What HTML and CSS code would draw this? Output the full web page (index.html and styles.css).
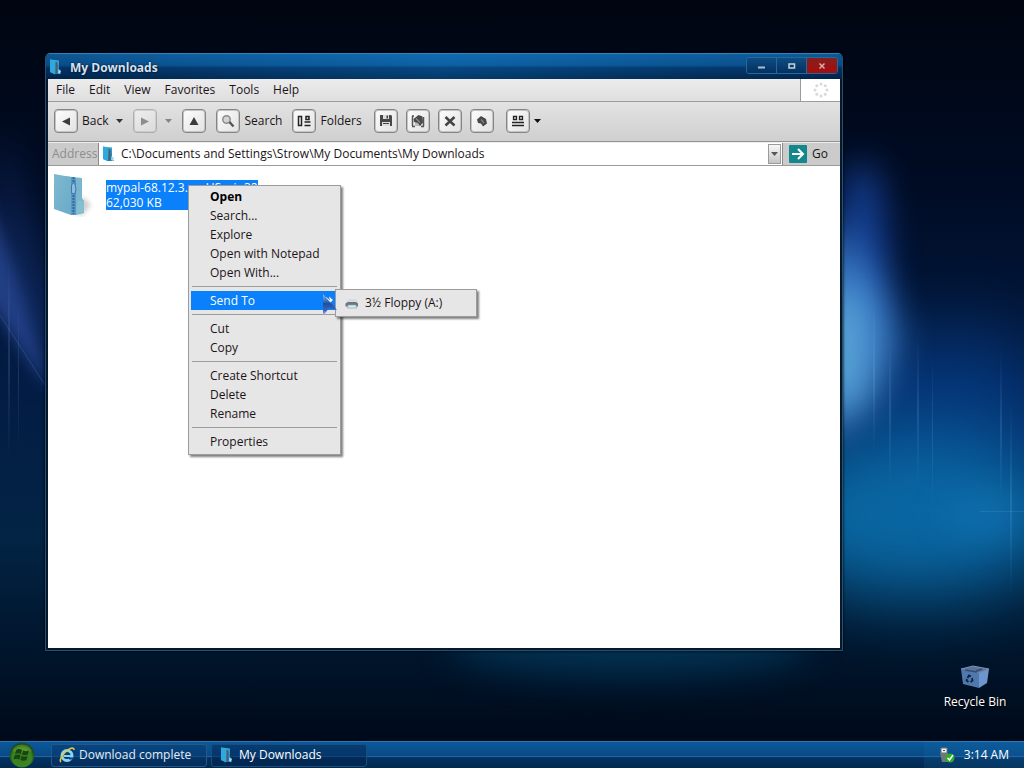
FILE: index.html
```html
<!DOCTYPE html>
<html lang="en">
<head>
    <meta charset="UTF-8">
    <meta name="viewport" content="width=device-width, initial-scale=1.0">
    <title>My Downloads</title>
    <link rel="stylesheet" href="styles.css">
</head>
<body>
    <!-- Shared icons -->
    <svg class="sprite" width="0" height="0" aria-hidden="true">
        <defs>
            <linearGradient id="folderBlue" x1="0" y1="0" x2="1" y2="1">
                <stop offset="0" stop-color="#4fc4ee"/>
                <stop offset="1" stop-color="#0c74b4"/>
            </linearGradient>
        </defs>
        <symbol id="folder" viewBox="0 0 16 16">
            <path d="M2 0.500l9 1v11l2 2.500H7L2 13z" fill="url(#folderBlue)"/>
            <path d="M2 0.500l5 1.500v13.500L2 13z" fill="#2ea9df"/>
            <path d="M7.500 2.500c2 0 2.500 3 2 6s.5 4-.5 6H7.500z" fill="#4f5c66"/>
            <path d="M10.500 10l2.500 2-1 3-2-1z" fill="#9ed8f0"/>
        </symbol>
    </svg>

    <div class="desktop">
        <svg class="wallpaper" viewBox="0 0 1024 768" preserveAspectRatio="none" aria-hidden="true">
            <defs>
                <linearGradient id="night" x1="0" y1="0" x2="0" y2="1">
                    <stop offset="0" stop-color="#000510"/>
                    <stop offset=".25" stop-color="#000c25"/>
                    <stop offset=".5" stop-color="#031c44"/>
                    <stop offset=".7" stop-color="#032445"/>
                    <stop offset=".86" stop-color="#00142a"/>
                    <stop offset="1" stop-color="#000613"/>
                </linearGradient>
                <linearGradient id="beam" x1="0" y1="0" x2="0" y2="1">
                    <stop offset="0" stop-color="#8fd0f5" stop-opacity="0"/>
                    <stop offset=".5" stop-color="#8fd0f5"/>
                    <stop offset="1" stop-color="#8fd0f5" stop-opacity="0"/>
                </linearGradient>
                <filter id="slight" color-interpolation-filters="sRGB" filterUnits="userSpaceOnUse" x="-150" y="-100" width="1324" height="968"><feGaussianBlur stdDeviation="7"/></filter>
                <filter id="soft" color-interpolation-filters="sRGB" filterUnits="userSpaceOnUse" x="-150" y="-100" width="1324" height="968"><feGaussianBlur stdDeviation="18"/></filter>
                <filter id="softer" color-interpolation-filters="sRGB" filterUnits="userSpaceOnUse" x="-150" y="-100" width="1324" height="968"><feGaussianBlur stdDeviation="36"/></filter>
            </defs>
            <rect width="1024" height="768" fill="url(#night)"/>
            <ellipse cx="630" cy="645" rx="180" ry="30" fill="#04395c" opacity=".8" filter="url(#soft)"/>
            <ellipse cx="950" cy="430" rx="110" ry="100" fill="#07469a" opacity=".6" filter="url(#softer)"/>
            <ellipse cx="915" cy="515" rx="150" ry="80" fill="#0a6aa6" opacity=".95" filter="url(#softer)"/>
            <ellipse cx="985" cy="515" rx="40" ry="18" fill="#1474b4" opacity=".7" filter="url(#soft)"/>
            <ellipse cx="862" cy="260" rx="22" ry="100" fill="#1a4cae" opacity=".9" filter="url(#soft)"/>
            <path d="M820 220C865 250 888 290 900 340L882 390 820 450z" fill="#3a7cc8" opacity=".9" filter="url(#soft)"/>
            <ellipse cx="843" cy="350" rx="24" ry="65" fill="#64b4e0" opacity=".8" filter="url(#soft)"/>
            <path d="M-20 180C5 240 30 310 52 405L45 384 0 315-20 290z" fill="#2c4a96" opacity=".8" filter="url(#slight)"/>
            <path d="M0 120L50 330V380L0 300z" fill="#1d3d86" opacity=".6" filter="url(#soft)"/>
            <path d="M0 315L45 385" stroke="#4d80c0" stroke-width="1" opacity=".3"/>
            <g fill="url(#beam)" opacity=".15">
                <rect x="8" y="260" width="2" height="200"/>
                <rect x="18" y="300" width="1" height="150"/>
                <rect x="873" y="295" width="2" height="160"/>
                <rect x="889" y="335" width="2" height="150"/>
                <rect x="917" y="335" width="2" height="150"/>
                <rect x="932" y="350" width="1" height="160"/>
                <rect x="1000" y="350" width="2" height="150"/>
                <rect x="1010" y="400" width="2" height="200"/>
            </g>
            <rect x="980" y="511" width="44" height="1" fill="#6fc1ef" opacity=".15"/>
        </svg>

        <main class="window">
            <div class="title-bar">
                <svg class="icon16"><use href="#folder"/></svg>
                <h1>My Downloads</h1>
                <div class="window-buttons">
                    <button type="button" aria-label="Minimize"><svg width="8" height="8"><path d="M0 4.500h7v2H0z" fill="#a9bed0"/></svg></button>
                    <button type="button" aria-label="Maximize"><svg width="8" height="8"><path d="M1 2h5.500v4H1z" fill="none" stroke="#c4d2de" stroke-width="1.500"/></svg></button>
                    <button type="button" class="close" aria-label="Close"><svg width="8" height="8"><path d="M1.500 1.500l5 5m0-5l-5 5" stroke="#dfaaaa" stroke-width="1.500"/></svg></button>
                </div>
            </div>

            <div class="menu-bar">
                <nav>
                    <button type="button">File</button>
                    <button type="button">Edit</button>
                    <button type="button">View</button>
                    <button type="button">Favorites</button>
                    <button type="button">Tools</button>
                    <button type="button">Help</button>
                </nav>
                <div class="throbber">
                    <svg width="16" height="16" fill="#d9d9d9">
                        <circle cx="8" cy="2" r="1.500"/><circle cx="12.200" cy="3.800" r="1.500"/><circle cx="14" cy="8" r="1.500"/><circle cx="12.200" cy="12.200" r="1.500"/>
                        <circle cx="8" cy="14" r="1.500"/><circle cx="3.800" cy="12.200" r="1.500"/><circle cx="2" cy="8" r="1.500"/><circle cx="3.800" cy="3.800" r="1.500"/>
                    </svg>
                </div>
            </div>

            <div class="toolbar">
                <div class="tool-group">
                    <button type="button" class="tool">
                        <span class="tool-icon"><svg class="icon16"><path d="M4 8.500l8-4v8z" fill="#3c3c3c"/></svg></span>Back
                    </button>
                    <button type="button" class="drop" aria-label="Back history"><svg width="7" height="4"><path d="M0 0h7L3.500 4z" fill="#333"/></svg></button>
                </div>
                <div class="tool-group disabled">
                    <button type="button" class="tool" aria-label="Forward">
                        <span class="tool-icon"><svg class="icon16"><path d="M4 4.500l8 4-8 4z" fill="#444"/></svg></span>
                    </button>
                    <button type="button" class="drop" aria-label="Forward history"><svg width="7" height="4"><path d="M0 0h7L3.500 4z" fill="#333"/></svg></button>
                </div>
                <button type="button" class="tool" aria-label="Up">
                    <span class="tool-icon"><svg class="icon16"><path d="M8 4l4.500 8h-9z" fill="#3c3c3c"/></svg></span>
                </button>
                <button type="button" class="tool">
                    <span class="tool-icon"><svg class="icon16"><circle cx="6.500" cy="6.500" r="3.700" fill="#d4d4d4" stroke="#8c8c8c" stroke-width="1.500"/><path d="M9.500 9l4 4.500" stroke="#555" stroke-width="2.400"/></svg></span>Search
                </button>
                <button type="button" class="tool">
                    <span class="tool-icon"><svg class="icon16"><path d="M2.500 3.500h3v9h-3zM10 3.500h3v3h-3z" fill="none" stroke="#222" stroke-width="1.500"/><path d="M8.500 9h6M8.500 12.500h6" stroke="#222" stroke-width="1.500"/></svg></span>Folders
                </button>
                <div class="file-tools">
                    <button type="button" class="tool" aria-label="Save">
                        <span class="tool-icon"><svg class="icon16"><path d="M2 2h11l1 1v10H2z" fill="#484848"/><path d="M5 2h6v4H5zM4 9h8v4H4z" fill="#ddd"/><path d="M8.500 2.500h1.500v3H8.500zM5 10h6v1H5z" fill="#444"/></svg></span>
                    </button>
                    <button type="button" class="tool" aria-label="Move to">
                        <span class="tool-icon"><svg class="icon16"><path d="M2.500 3v10M13.500 4v9.500M2 13.500h3M11 13.500h3M2 3h2" stroke="#555" stroke-width="1.500"/><path d="M5 9v4h6v-3" fill="#bbb"/><path d="M3.500 6l5-4 4 1.500.5 6-3 3.500-2-3-4-1z" fill="#4a4a4a"/><path d="M6 5.500l4 4" stroke="#8c8c8c" stroke-width="1.200"/></svg></span>
                    </button>
                    <button type="button" class="tool" aria-label="Delete">
                        <span class="tool-icon"><svg class="icon16"><path d="M3.500 4l9 8.500m0-8.500l-9 8.500" stroke="#444" stroke-width="2.500"/></svg></span>
                    </button>
                    <button type="button" class="tool" aria-label="Undo">
                        <span class="tool-icon"><svg class="icon16"><path d="M3 6.500L7 3l5 3 1 4.500-4 3L7 10.500 4 10z" fill="#484848"/><path d="M7 6.500l3 3.500" stroke="#858585" stroke-width="1.300"/></svg></span>
                    </button>
                </div>
                <button type="button" class="tool views">
                    <span class="tool-icon"><svg class="icon16"><path d="M3.500 3.500h3v3h-3zM9.500 3.500h3v3h-3z" fill="none" stroke="#222" stroke-width="1.300"/><path d="M2 9.500h12M2 12.500h12" stroke="#222" stroke-width="1.500"/></svg></span>
                    <svg width="7" height="4"><title>Views</title><path d="M0 0h7L3.500 4z" fill="#111"/></svg>
                </button>
            </div>

            <form class="address-bar">
                <label for="address">Address</label>
                <div class="address-field">
                    <svg class="icon16"><use href="#folder"/></svg>
                    <input id="address" type="text" value="C:\Documents and Settings\Strow\My Documents\My Downloads">
                    <button type="button" class="address-drop" aria-label="Show addresses"><svg width="7" height="4"><path d="M0 0h7L3.500 4z" fill="#555"/></svg></button>
                </div>
                <button type="button" class="go">
                    <svg width="18" height="18"><rect width="18" height="18" rx="1" fill="#12888c"/><path d="M3 9h11M9 4l5 5-5 5" fill="none" stroke="#fff" stroke-width="2"/></svg>Go
                </button>
            </form>

            <div class="content">
                <div class="file">
                    <svg class="file-icon" width="40" height="44" viewBox="0 0 40 44">
                        <defs>
                            <linearGradient id="zipFace" x1="0" y1="0" x2="1" y2="1">
                                <stop offset="0" stop-color="#7fb9ce"/>
                                <stop offset="1" stop-color="#69abc8"/>
                            </linearGradient>
                            <filter id="shade"><feGaussianBlur stdDeviation="2"/></filter>
                        </defs>
                        <path d="M16 38l14-14 7 8-9 11z" fill="#999" opacity=".45" filter="url(#shade)"/>
                        <path d="M10 3l18 2v20l2 3v12l-8 2-6-4z" fill="#7ab6cf"/>
                        <path d="M0 1l17 3v38L0 36z" fill="url(#zipFace)"/>
                        <path d="M17 4l5 1v37l-5 0z" fill="#5c97c2"/>
                        <path d="M19.500 4v37" stroke="#2c6aa8" stroke-width="2" stroke-dasharray="2 1"/>
                        <path d="M17.500 12l3-3 1.500 7-1 5-3.500-1z" fill="#8fbbdd" stroke="#3d77ab"/>
                        <path d="M24 27l6 2v10l-8 2z" fill="#84becf"/>
                    </svg>
                    <div class="file-label">mypal-68.12.3.en-US.win32<br>62,030 KB</div>
                </div>

                <div class="context-menu" role="menu">
                    <button type="button" role="menuitem" class="default">Open</button>
                    <button type="button" role="menuitem">Search...</button>
                    <button type="button" role="menuitem">Explore</button>
                    <button type="button" role="menuitem">Open with Notepad</button>
                    <button type="button" role="menuitem">Open With...</button>
                    <hr>
                    <div class="send-to">
                        <button type="button" role="menuitem" class="selected">Send To<svg width="5" height="8"><path d="M0 0l5 4-5 4z" fill="#fff"/></svg></button>
                        <div class="submenu" role="menu">
                            <button type="button" role="menuitem">
                                <svg class="icon16"><path d="M3 6l2-2h7l2 3v1H2z" fill="#d7dade"/><path d="M1.500 8.500L4 7h8l2 1.500v3H1.500z" fill="#6c757c"/><path d="M4 10h8l.5 3h-9z" fill="#d4eef4" stroke="#8aa2ae" stroke-width=".7"/></svg>3½ Floppy (A:)
                            </button>
                        </div>
                        <svg class="cursor" width="18" height="24" viewBox="0 0 18 24">
                            <defs>
                                <linearGradient id="pointer" x1="0" y1="0" x2="0" y2="1">
                                    <stop offset="0" stop-color="#8fbcf4"/>
                                    <stop offset=".45" stop-color="#1d4f9f"/>
                                    <stop offset=".75" stop-color="#3f66c4"/>
                                    <stop offset="1" stop-color="#c3cdf0"/>
                                </linearGradient>
                            </defs>
                            <path d="M1 1l14 16-8-2-6 8z" fill="url(#pointer)"/>
                            <path d="M7 3.500l4 3.500-2.500 2.500z" fill="#fff"/>
                        </svg>
                    </div>
                    <hr>
                    <button type="button" role="menuitem">Cut</button>
                    <button type="button" role="menuitem">Copy</button>
                    <hr>
                    <button type="button" role="menuitem">Create Shortcut</button>
                    <button type="button" role="menuitem">Delete</button>
                    <button type="button" role="menuitem">Rename</button>
                    <hr>
                    <button type="button" role="menuitem">Properties</button>
                </div>
            </div>
        </main>

        <a href="#" class="recycle-bin">
            <svg width="30" height="24" viewBox="0 0 30 24">
                <path d="M1 4L13 1l16 3-10 4z" fill="#5a7499" stroke="#8fa5c2" stroke-width=".8"/>
                <path d="M1 4l18 4v15L3 19z" fill="#4f78ad"/>
                <path d="M19 8l10-4-2 14-8 5z" fill="#6c96cc"/>
                <path d="M5 5l12 2M22 4l-6 2" stroke="#334d72" stroke-width="1.500"/>
                <path d="M7.500 13l1.500-2.500 2 1M12 13l.5 2.500-2 1.500M8.500 17l-2-1.500.5-1.500" fill="none" stroke="#0d2244" stroke-width="1.800"/>
            </svg>
            Recycle Bin
        </a>
    </div>

    <footer class="taskbar">
        <button type="button" class="start" aria-label="Start">
            <svg width="28" height="26" viewBox="0 0 28 26">
                <defs>
                    <radialGradient id="orb" cx=".5" cy=".6" r=".5">
                        <stop offset="0" stop-color="#347c1d"/>
                        <stop offset=".75" stop-color="#3c8620"/>
                        <stop offset="1" stop-color="#1d4d22"/>
                    </radialGradient>
                </defs>
                <circle cx="14" cy="13" r="12.500" fill="url(#orb)"/>
                <path d="M4 9a11 11 0 0 1 20 0q-10 4-20 0z" fill="#86ba3d" opacity=".35"/>
                <path d="M8 8q3-2 6 0l-1 4q-3-1.500-6 0zM15 8.500q3 1.500 6 0l-1 4q-3 1.500-6 0zM6.500 13.500q3-2 6 0l-1 4q-3-1.500-6 0zM13.500 14q3 1.500 6 0l-1 4q-3 1.500-6 0z" fill="#184516"/>
            </svg>
        </button>
        <button type="button" class="task">
            <svg class="icon16"><circle cx="8" cy="8.500" r="5" fill="none" stroke="#8cd3f2" stroke-width="3"/><path d="M5 9h9" stroke="#8cd3f2" stroke-width="2"/><path d="M10 10.500h5v2h-5z" fill="#0a447c"/><path d="M2 15c-3-2 5-13 11-14 2 0 2 1 2 2" fill="none" stroke="#e8c63a" stroke-width="1.600"/></svg>
            Download complete
        </button>
        <button type="button" class="task active">
            <svg class="icon16"><use href="#folder"/></svg>
            My Downloads
        </button>
        <div class="tray">
            <svg class="icon16"><path d="M2 1h6v5H2z" fill="#e8edef" stroke="#657481"/><path d="M1 6h8v9H3z" fill="#6e7878"/><path d="M4 3h2v1H4z" fill="#555"/><circle cx="11" cy="11" r="4.500" fill="#2bae29"/><path d="M8.500 11l2 2 3.500-5" fill="none" stroke="#fff" stroke-width="1.500"/></svg>
            <time>3:14 AM</time>
        </div>
    </footer>
</body>
</html>
```
FILE: styles.css
```css
* { margin: 0; padding: 0; box-sizing: border-box; }
html, body { height: 100%; }
body { font: 12px/16px 'Open Sans', 'Noto Sans', sans-serif; color: #1c1418; background: #000613; display: flex; flex-direction: column; overflow: hidden; }
button, input { font: inherit; color: inherit; background: none; border: none; }
button { cursor: pointer; white-space: nowrap; }
svg { display: block; flex: none; }
.sprite { position: absolute; }
.icon16 { width: 16px; height: 16px; }

/* Desktop */
.desktop { flex: 1; position: relative; }
.wallpaper { position: absolute; top: 0; left: 0; width: 100%; height: 100vh; }
.recycle-bin { position: absolute; right: 12px; bottom: 31px; width: 74px; display: flex; flex-direction: column; align-items: center; gap: 5px; color: #fff; text-decoration: none; white-space: nowrap; text-shadow: 1px 1px 1px #000; }

/* Window */
.window { position: absolute; top: 53px; left: 45px; right: 181px; bottom: 90px; display: flex; flex-direction: column; padding: 0 2px 2px; background: #06182d; border: 1px solid #24516e; border-top-color: #2b83bf; border-radius: 5px 5px 0 0; box-shadow: 0 0 3px #000; }
.title-bar { display: flex; align-items: center; gap: 6px; height: 25px; margin: 0 -2px; padding: 0 2px; border-radius: 4px 4px 0 0; background: linear-gradient(90deg, rgba(0,10,40,0.15), rgba(20,130,210,0.2) 50%, rgba(0,10,40,0.15)), linear-gradient(#1166a8 0%, #0b5797 45%, #04396f 55%, #00284f 100%); }
.title-bar h1 { flex: 1; font-size: 12px; line-height: 16px; color: #d6e2f0; padding-top: 2px; text-shadow: 0 0 2px #001; }
.window-buttons { display: flex; align-self: flex-start; margin: 3px 2px 0 0; border: 1px solid #22699c; border-radius: 3px; overflow: hidden; }
.window-buttons button { width: 30px; height: 15px; display: flex; align-items: center; justify-content: center; border-right: 1px solid #22699c; background: linear-gradient(#0e4d82, #05305f); }
.window-buttons .close { border-right: none; background: linear-gradient(#84201f, #a80c0c); }

.menu-bar { display: flex; height: 23px; border-bottom: 1px solid #9b9b9b; background: linear-gradient(#ececec, #dfdfdf); }
.menu-bar nav { flex: 1; display: flex; padding-left: 1px; }
.menu-bar nav button { padding: 0 7px; }
.throbber { width: 40px; display: flex; align-items: center; justify-content: center; background: #fff; border-left: 1px solid #9b9b9b; }

.toolbar { display: flex; align-items: center; gap: 10px; height: 40px; padding: 0 6px 1px; background: linear-gradient(#e3e3e3, #cfcfcf); border-bottom: 1px solid #929292; }
.tool-group { display: flex; align-items: center; gap: 8px; }
.tool { display: flex; align-items: center; gap: 4px; }
.tool-icon { width: 24px; height: 24px; display: flex; align-items: center; justify-content: center; border: 1px solid #858585; border-radius: 4px; background: linear-gradient(135deg, #fdfdfd, #e2e2e2); box-shadow: inset 0 0 0 1px #c4c4c4; }
.file-tools { display: flex; gap: 8px; margin: 0 2px; }
.disabled { opacity: 0.5; }

.address-bar { display: flex; align-items: stretch; height: 24px; border-top: 1px solid #eee; border-bottom: 1px solid #9b9b9b; background: #cbcbcb; }
.address-bar label { width: 50px; line-height: 22px; padding-left: 4px; color: #8d8d8d; }
.address-field { flex: 1; display: flex; align-items: center; padding: 0 1px 0 2px; background: #fff; border-left: 1px solid #8a8a8a; border-right: 1px solid #8a8a8a; }
.address-field input { flex: 1; min-width: 0; padding-left: 4px; outline: none; }
.address-drop { width: 13px; height: 20px; display: flex; align-items: center; justify-content: center; border: 1px solid #9a9a9a; background: linear-gradient(#f7f7f7, #c5c5c5); }
.go { width: 57px; display: flex; align-items: center; gap: 5px; padding-left: 6px; }

.content { flex: 1; position: relative; background: #fff; }
.file { display: flex; gap: 12px; padding: 7px 6px; }
.file-label { align-self: center; line-height: 15px; color: #fff; background: #0a80fa; white-space: nowrap; }

/* Context menu */
.context-menu { position: absolute; left: 140px; top: 19px; width: 153px; padding: 1px 2px 3px; }
.context-menu, .submenu { background: #e6e6e6; border: 1px solid #9c9c9c; box-shadow: 2px 2px 2px rgba(0,0,0,0.5); }
.context-menu button { display: flex; align-items: center; width: 100%; height: 19px; padding: 0 7px 0 19px; text-align: left; }
.context-menu .default { font-weight: bold; color: #000; }
.context-menu .selected { justify-content: space-between; color: #fff; background: #0a80fa; }
.context-menu hr { height: 1px; margin: 4px 1px; border: none; background: #9c9c9c; }
.send-to { position: relative; }
.submenu { position: absolute; left: 144px; top: -2px; width: 142px; padding: 3px; }
.context-menu .submenu button { height: 20px; gap: 5px; padding: 0 5px; }
.cursor { position: absolute; left: 131px; top: 2px; }

/* Taskbar */
.taskbar { position: relative; display: flex; align-items: center; gap: 4px; height: 27px; padding-left: 8px; color: #e3ecf6; border-top: 1px solid #2b78b4; background: linear-gradient(#0c589a 0%, #084a86 54%, #2767a0 56%, #033263 60%, #02294f 100%); }
.start { margin-right: 11px; }
.task { display: flex; align-items: center; gap: 4px; width: 156px; height: 23px; padding: 0 7px; border: 1px solid #22598a; border-radius: 3px; background: rgba(5,52,102,0.5); }
.task.active { color: #fff; background: rgba(2,36,78,0.5); border-color: #174f80; }
.tray { display: flex; align-items: center; gap: 9px; height: 100%; margin-left: auto; padding: 0 15px; color: #fff; background: rgba(20,110,170,0.2); }
```
